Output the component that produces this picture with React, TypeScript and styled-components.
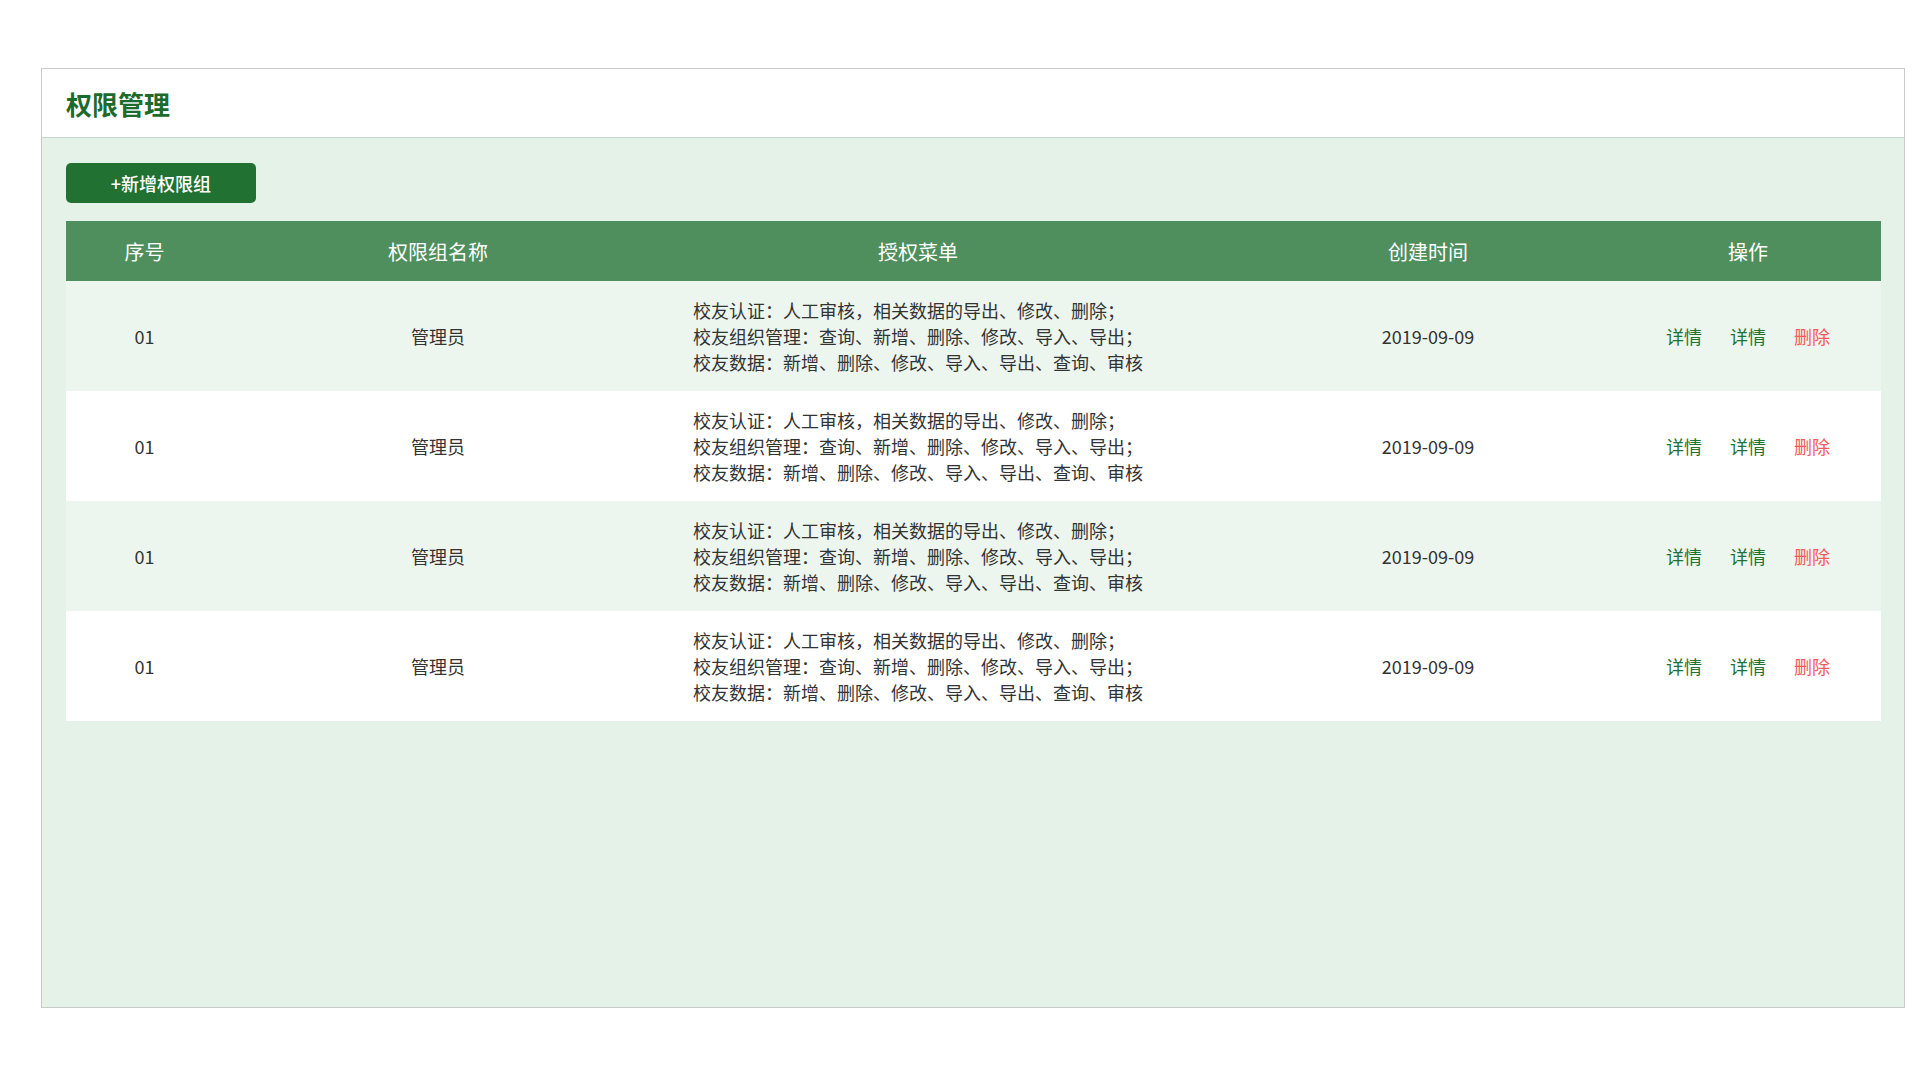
import React from 'react';
import styled, { createGlobalStyle } from 'styled-components';

const GlobalStyle = createGlobalStyle`
  * {
    box-sizing: border-box;
    margin: 0;
    padding: 0;
  }

  body {
    font-family: 'Noto Sans CJK SC', 'Noto Sans', sans-serif;
    background-color: #ffffff;
    color: #333;
  }
`;

// 序号 / 权限组名称 / 授权菜单 / 创建时间 / 操作
const COLUMNS = '157px 430px 530px 420px 1fr';

const Page = styled.div`
  padding: 68px 15px 72px 41px;
`;

const Panel = styled.section`
  width: 1864px;
  height: 940px;
  border: 1px solid #c9cbc9;
  background-color: #e4f2e7;
  display: flex;
  flex-direction: column;
`;

const PanelHeader = styled.header`
  height: 69px;
  flex-shrink: 0;
  background-color: #ffffff;
  border-bottom: 1px solid #c6d6ca;
  display: flex;
  align-items: center;
  padding-left: 24px;
`;

const Title = styled.h1`
  font-size: 26px;
  font-weight: 700;
  color: #1d6b2c;
`;

const PanelBody = styled.div`
  flex: 1;
  padding: 25px 23px 0 24px;
`;

const AddButton = styled.button`
  width: 190px;
  height: 40px;
  border: none;
  border-radius: 5px;
  background-color: #217232;
  color: #ffffff;
  font-family: inherit;
  font-size: 18px;
  font-weight: 500;
  cursor: pointer;
  margin-bottom: 18px;
`;

const Table = styled.div`
  width: 1815px;
`;

const HeaderRow = styled.div`
  display: grid;
  grid-template-columns: ${COLUMNS};
  height: 60px;
  background-color: #4f8f5e;
`;

const HeaderCell = styled.div<{ $shift?: number }>`
  display: flex;
  align-items: center;
  justify-content: center;
  color: #ffffff;
  font-size: 20px;
  font-weight: 400;
  padding-left: ${(p) => p.$shift ?? 0}px;
`;

const BodyRow = styled.div<{ $striped: boolean }>`
  display: grid;
  grid-template-columns: ${COLUMNS};
  height: 110px;
  background-color: ${(p) => (p.$striped ? '#ecf6ee' : '#ffffff')};
`;

const Cell = styled.div<{ $shift?: number }>`
  display: flex;
  align-items: center;
  justify-content: center;
  font-size: 18px;
  color: #333;
  padding-left: ${(p) => p.$shift ?? 0}px;
`;

const MenuCell = styled.div`
  display: flex;
  align-items: center;
  justify-content: center;
`;

const MenuList = styled.div`
  font-size: 18px;
  line-height: 26px;
  color: #333;
  white-space: nowrap;
`;

const ActionCell = styled(Cell)`
  gap: 28px;
`;

const ActionLink = styled.a<{ $danger?: boolean }>`
  font-size: 18px;
  color: ${(p) => (p.$danger ? '#f55a5a' : '#217232')};
  text-decoration: none;
  cursor: pointer;
`;

const menuLines = [
  '校友认证：人工审核，相关数据的导出、修改、删除；',
  '校友组织管理：查询、新增、删除、修改、导入、导出；',
  '校友数据：新增、删除、修改、导入、导出、查询、审核',
];

const rows = [
  { no: '01', name: '管理员', date: '2019-09-09' },
  { no: '01', name: '管理员', date: '2019-09-09' },
  { no: '01', name: '管理员', date: '2019-09-09' },
  { no: '01', name: '管理员', date: '2019-09-09' },
];

export default function App() {
  return (
    <>
      <GlobalStyle />
      <Page>
        <Panel>
          <PanelHeader>
            <Title>权限管理</Title>
          </PanelHeader>
          <PanelBody>
            <AddButton>+新增权限组</AddButton>
            <Table>
              <HeaderRow>
                <HeaderCell>序号</HeaderCell>
                <HeaderCell>权限组名称</HeaderCell>
                <HeaderCell>授权菜单</HeaderCell>
                <HeaderCell $shift={70}>创建时间</HeaderCell>
                <HeaderCell $shift={12}>操作</HeaderCell>
              </HeaderRow>
              {rows.map((row, i) => (
                <BodyRow key={i} $striped={i % 2 === 0}>
                  <Cell>{row.no}</Cell>
                  <Cell>{row.name}</Cell>
                  <MenuCell>
                    <MenuList>
                      {menuLines.map((line) => (
                        <div key={line}>{line}</div>
                      ))}
                    </MenuList>
                  </MenuCell>
                  <Cell $shift={70}>{row.date}</Cell>
                  <ActionCell $shift={12}>
                    <ActionLink>详情</ActionLink>
                    <ActionLink>详情</ActionLink>
                    <ActionLink $danger>删除</ActionLink>
                  </ActionCell>
                </BodyRow>
              ))}
            </Table>
          </PanelBody>
        </Panel>
      </Page>
    </>
  );
}
